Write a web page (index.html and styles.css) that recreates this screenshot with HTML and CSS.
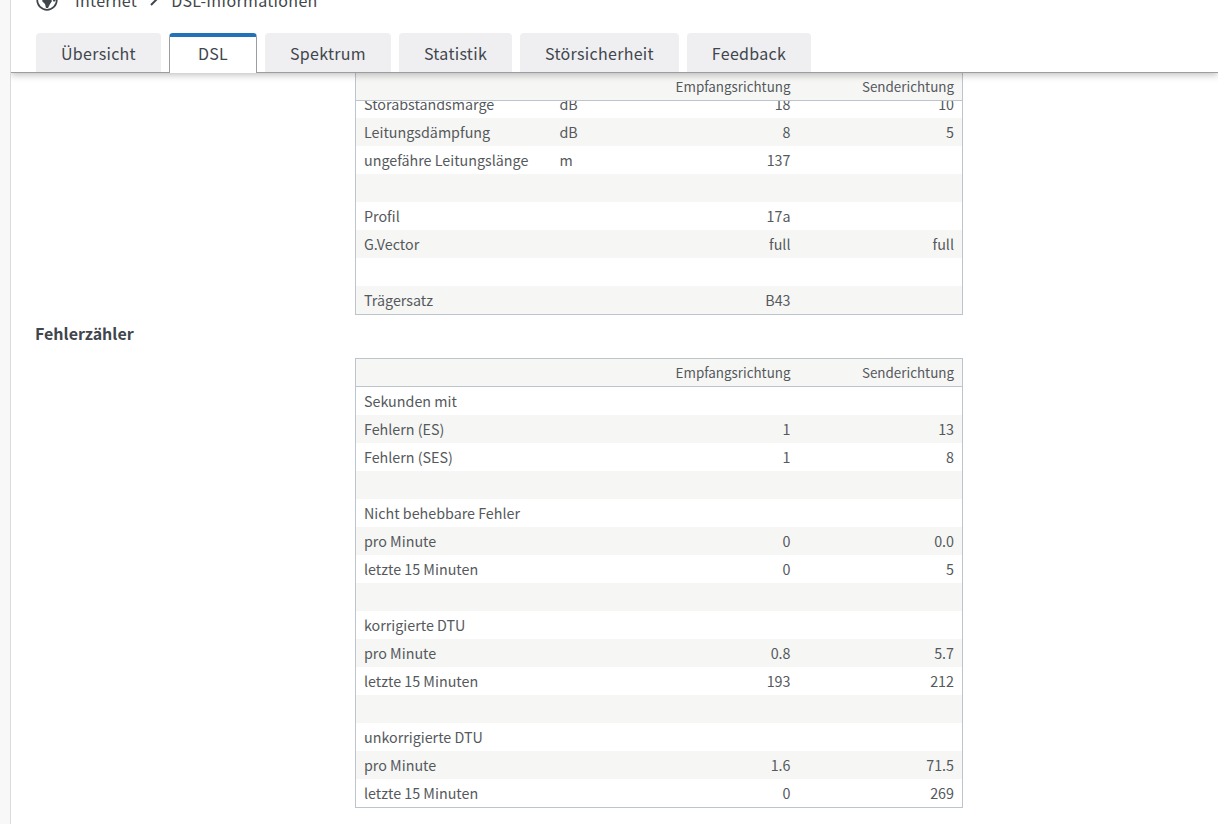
FILE: index.html
```
<!DOCTYPE html>
<html lang="de">

<head>
    <meta charset="utf-8">
    <title>DSL-Informationen</title>
    <link rel="stylesheet" href="styles.css">
</head>

<body>
    <div class="side"></div>
    <div class="main">
        <div class="header">
            <div class="breadcrumb">
                <svg class="globe" width="22" height="22" viewBox="0 0 22 22">
                    <circle cx="11" cy="11" r="9.8" fill="#fff" stroke="#3f464c" stroke-width="1.7"/>
                    <path d="M2 8l4-5 5 0 1 3-3 3-3 1-3 1zM8 9l6 0 2 3-2 3-2 4-2 0-1-4-3-3zM15 5l4 2 1 4-2 2-2-3-2-2z" fill="#3f464c"/>
                </svg>
                <span class="crumb">Internet</span>
                <svg class="arrow" width="8" height="12" viewBox="0 0 8 12">
                    <path d="M1 1l5 5-5 5" fill="none" stroke="#3f464c" stroke-width="2"/>
                </svg>
                <span class="crumb">DSL-Informationen</span>
            </div>
            <div class="tabs">
                <a class="tab tab1">Übersicht</a>
                <a class="tab tab2 active">DSL</a>
                <a class="tab tab3">Spektrum</a>
                <a class="tab tab4">Statistik</a>
                <a class="tab tab5">Störsicherheit</a>
                <a class="tab tab6">Feedback</a>
            </div>
        </div>
        <div class="content">
            <table class="values first">
                <colgroup><col class="name"><col class="unit"><col class="down"><col class="up"></colgroup>
                <thead>
                    <tr><th></th><th></th><th>Empfangsrichtung</th><th>Senderichtung</th></tr>
                </thead>
                <tbody>
                    <tr><td>Störabstandsmarge</td><td>dB</td><td>18</td><td>10</td></tr>
                    <tr><td>Leitungsdämpfung</td><td>dB</td><td>8</td><td>5</td></tr>
                    <tr><td>ungefähre Leitungslänge</td><td>m</td><td>137</td><td></td></tr>
                    <tr><td></td><td></td><td></td><td></td></tr>
                    <tr><td>Profil</td><td></td><td>17a</td><td></td></tr>
                    <tr><td>G.Vector</td><td></td><td>full</td><td>full</td></tr>
                    <tr><td></td><td></td><td></td><td></td></tr>
                    <tr><td>Trägersatz</td><td></td><td>B43</td><td></td></tr>
                </tbody>
            </table>
            <h2>Fehlerzähler</h2>
            <table class="values">
                <colgroup><col class="name"><col class="unit"><col class="down"><col class="up"></colgroup>
                <thead>
                    <tr><th></th><th></th><th>Empfangsrichtung</th><th>Senderichtung</th></tr>
                </thead>
                <tbody>
                    <tr><td>Sekunden mit</td><td></td><td></td><td></td></tr>
                    <tr><td>Fehlern (ES)</td><td></td><td>1</td><td>13</td></tr>
                    <tr><td>Fehlern (SES)</td><td></td><td>1</td><td>8</td></tr>
                    <tr><td></td><td></td><td></td><td></td></tr>
                    <tr><td>Nicht behebbare Fehler</td><td></td><td></td><td></td></tr>
                    <tr><td>pro Minute</td><td></td><td>0</td><td>0.0</td></tr>
                    <tr><td>letzte 15 Minuten</td><td></td><td>0</td><td>5</td></tr>
                    <tr><td></td><td></td><td></td><td></td></tr>
                    <tr><td>korrigierte DTU</td><td></td><td></td><td></td></tr>
                    <tr><td>pro Minute</td><td></td><td>0.8</td><td>5.7</td></tr>
                    <tr><td>letzte 15 Minuten</td><td></td><td>193</td><td>212</td></tr>
                    <tr><td></td><td></td><td></td><td></td></tr>
                    <tr><td>unkorrigierte DTU</td><td></td><td></td><td></td></tr>
                    <tr><td>pro Minute</td><td></td><td>1.6</td><td>71.5</td></tr>
                    <tr><td>letzte 15 Minuten</td><td></td><td>0</td><td>269</td></tr>
                </tbody>
            </table>
        </div>
    </div>
</body>

</html>
```
FILE: styles.css
```
* {
    box-sizing: border-box;
}

body {
    margin: 0;
    height: 100vh;
    display: flex;
    overflow: hidden;
    background: #fff;
    color: #3f464c;
    font-family: "Noto Sans CJK SC", "Open Sans", sans-serif;
}

.side {
    width: 11px;
    background: #f8f8f8;
    border-right: 1px solid #d9dadc;
}

.main {
    flex: 1;
    display: flex;
    flex-direction: column;
    overflow: hidden;
}

.header {
    position: relative;
    z-index: 2;
    height: 73px;
    padding-left: 25px;
    background: #fff;
    border-bottom: 1px solid #9b9da0;
    box-shadow: 0 2px 7px rgba(0, 0, 0, 0.25);
}

.breadcrumb {
    display: flex;
    align-items: center;
    height: 24px;
    margin-top: -12px;
    font-size: 16px;
    letter-spacing: 0.3px;
}

.globe {
    margin-right: 17px;
}

.arrow {
    margin: 0 13px 0 13px;
}

.tabs {
    display: flex;
    gap: 8px;
    margin-top: 21px;
}

.tab {
    height: 39px;
    line-height: 40px;
    text-align: center;
    background: #efeff2;
    border-radius: 4px 4px 0 0;
    font-size: 16px;
    letter-spacing: 0.3px;
}

.tab1 { width: 125px; }
.tab2 { width: 88px; }
.tab3 { width: 126px; }
.tab4 { width: 113px; }
.tab5 { width: 159px; }
.tab6 { width: 124px; }

.tab.active {
    height: 40px;
    line-height: 32px;
    background: #fff;
    border: 1px solid #9b9da0;
    border-top: 4px solid #2172b9;
    border-bottom: none;
}

.content {
    flex: 1;
    min-height: 0;
    overflow: hidden;
    padding-left: 24px;
}

.values {
    width: 608px;
    margin-left: 320px;
    table-layout: fixed;
    border: 1px solid #bcc5cc;
    border-spacing: 0;
    color: #55595c;
    font-size: 14.3px;
}

/* scrolled a little, the head row stays under the tabs */
.first {
    margin-top: -12px;
}

.name { width: 195.5px; }
.unit { width: 97px; }
.down { width: 150px; }

.values th {
    position: sticky;
    top: 0;
    height: 28px;
    padding: 0 8px;
    line-height: 27px;
    background: #f6f6f5;
    border-bottom: 1px solid #bcc5cc;
    font-size: 13.4px;
    font-weight: normal;
    text-align: right;
}

.values td {
    height: 28px;
    padding: 0 8px;
    line-height: 28px;
    white-space: nowrap;
}

.values td:nth-child(n+3) {
    text-align: right;
}

.values tbody tr:nth-child(even) {
    background: #f6f6f5;
}

h2 {
    height: 43px;
    margin: 0;
    line-height: 36px;
    font-size: 16px;
    font-weight: bold;
}
```
